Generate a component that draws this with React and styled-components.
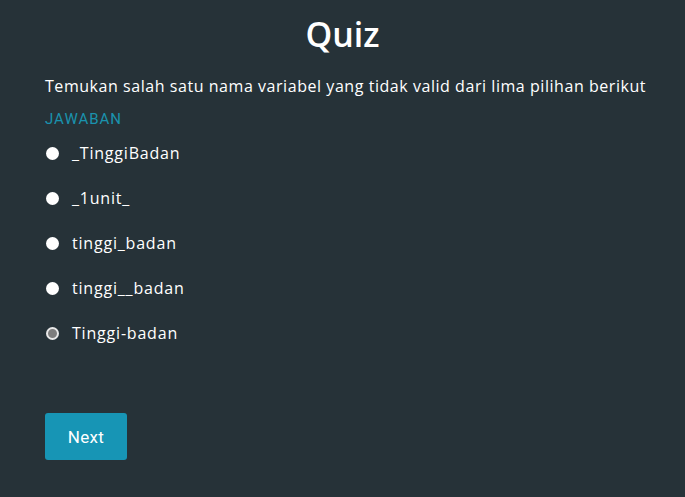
import React from "react";
import styled, { createGlobalStyle } from "styled-components";

const Global = createGlobalStyle`
  html, body { margin: 0; padding: 0; background: #263238; }
  body { font-family: "Open Sans", "Liberation Sans", sans-serif; }
`;

const Page = styled.div`
  width: 685px;
  height: 497px;
  background: #263238;
  color: #ffffff;
  box-sizing: border-box;
  padding: 13px 30px 0 45px;
  display: flex;
  flex-direction: column;
`;

const Title = styled.h1`
  margin: 0 0 0 -15px;
  text-align: center;
  font-family: "Open Sans", sans-serif;
  font-weight: 600;
  font-size: 34px;
  line-height: 42px;
`;

const Question = styled.p`
  margin: 20px 0 0 0;
  font-size: 16px;
  line-height: 22px;
  letter-spacing: 0.55px;
  white-space: nowrap;
`;

const Label = styled.div`
  margin-top: 13px;
  font-family: Roboto, sans-serif;
  font-size: 15px;
  line-height: 18px;
  color: #1a92ae;
  letter-spacing: 1px;
`;

const Options = styled.div`
  margin-top: 14px;
  display: flex;
  flex-direction: column;
  gap: 23px;
`;

const Option = styled.label`
  display: flex;
  align-items: center;
  gap: 13px;
  font-size: 16px;
  line-height: 22px;
  height: 22px;
  letter-spacing: 0.8px;
`;

const Dot = styled.span`
  width: 13px;
  height: 13px;
  margin-left: 1px;
  border-radius: 50%;
  box-sizing: border-box;
  background: ${(p) => (p.$muted ? "#7d7d7d" : "#ffffff")};
  border: ${(p) => (p.$muted ? "2px solid #e8e8e8" : "none")};
`;

const Button = styled.button`
  margin-top: 69px;
  align-self: flex-start;
  width: 82px;
  height: 47px;
  border: none;
  border-radius: 3px;
  background: #1795b5;
  color: #ffffff;
  font-family: Roboto, sans-serif;
  font-size: 17px;
  letter-spacing: 0.3px;
  cursor: pointer;
`;

const options = ["_TinggiBadan", "_1unit_", "tinggi_badan", "tinggi__badan", "Tinggi-badan"];

export default function App() {
  return (
    <>
      <Global />
      <Page>
        <Title>Quiz</Title>
        <Question>Temukan salah satu nama variabel yang tidak valid dari lima pilihan berikut</Question>
        <Label>JAWABAN</Label>
        <Options>
          {options.map((o, i) => (
            <Option key={o}>
              <Dot $muted={i === options.length - 1} />
              {o}
            </Option>
          ))}
        </Options>
        <Button>Next</Button>
      </Page>
    </>
  );
}
